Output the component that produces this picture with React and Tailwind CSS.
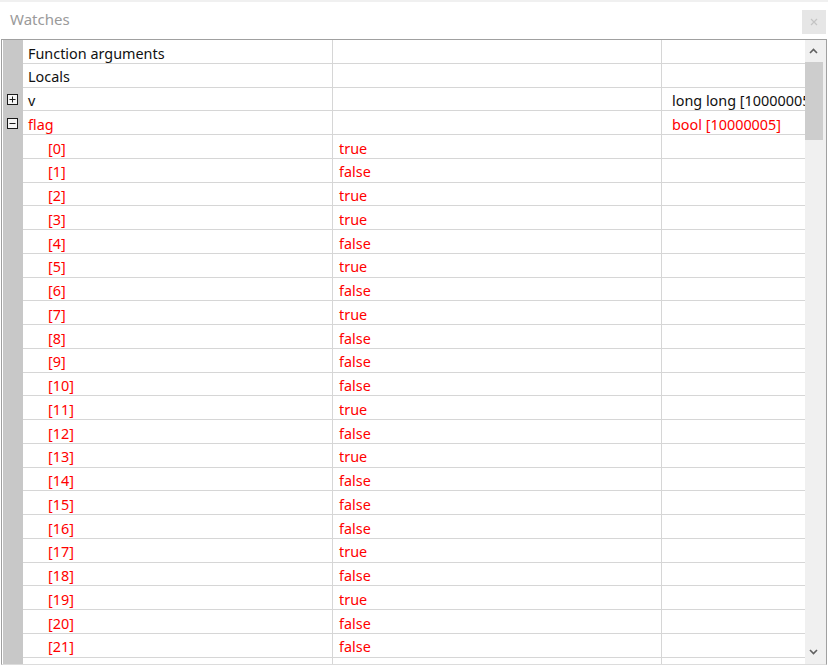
const rows = [
  { name: "Function arguments", value: "", type: "", color: "black", level: 0 },
  { name: "Locals", value: "", type: "", color: "black", level: 0 },
  { name: "v", value: "", type: "long long [10000005]", color: "black", level: 0, toggle: "plus" },
  { name: "flag", value: "", type: "bool [10000005]", color: "red", level: 0, toggle: "minus" },
];

const flags = [
  true, false, true, true, false, true, false, true, false, false, false,
  true, false, true, false, false, false, true, false, true, false, false,
];

flags.forEach((f, i) => {
  rows.push({ name: `[${i}]`, value: f ? "true" : "false", type: "", color: "red", level: 1 });
});

// partly visible row below the fold, its text falls outside the panel
rows.push({ name: "", value: "", type: "", color: "red", level: 1 });

function Toggle({ kind }) {
  return (
    <svg width="11" height="11" viewBox="0 0 11 11" className="block">
      <rect x="0.5" y="0.5" width="10" height="10" fill="#f4f4f4" stroke="#1a1a1a" />
      <line x1="2.5" y1="5.5" x2="8.5" y2="5.5" stroke="#1a1a1a" />
      {kind === "plus" && <line x1="5.5" y1="2.5" x2="5.5" y2="8.5" stroke="#1a1a1a" />}
    </svg>
  );
}

function Row({ row }) {
  const text = row.color === "red" ? "text-[#ff0000]" : "text-[#111111]";
  return (
    <div className="flex h-[23.76px] shrink-0">
      <div className="w-[20px] shrink-0 bg-[#c8c8c8] flex items-center pl-[4px] pt-[1px]">
        {row.toggle && <Toggle kind={row.toggle} />}
      </div>
      <div className="flex flex-1 border-b border-[#d6d6d6]">
        <div
          className={`w-[310px] shrink-0 border-r border-[#d6d6d6] flex items-center pt-[5px] whitespace-nowrap overflow-hidden ${text} ${
            row.level ? "pl-[25px]" : "pl-[5px]"
          }`}
        >
          {row.name}
        </div>
        <div className={`w-[329px] shrink-0 border-r border-[#d6d6d6] flex items-center pt-[5px] pl-[6px] ${text}`}>
          {row.value}
        </div>
        <div className={`flex-1 min-w-0 flex items-center pt-[5px] pl-[10px] whitespace-nowrap overflow-hidden ${text}`}>
          {row.type}
        </div>
      </div>
    </div>
  );
}

export default function App() {
  return (
    <div
      className="w-[828px] h-[666px] bg-white overflow-hidden text-[14.4px] leading-none"
      style={{ fontFamily: '"Noto Sans", "Open Sans", sans-serif' }}
    >
      {/* title bar */}
      <div className="h-[39px] border-t-2 border-[#f0f0f0] flex items-start justify-between">
        <div className="pl-[10px] pt-[10px] text-[15px] text-[#9a9a9a]">Watches</div>
        <div className="mt-[8px] mr-[2px] w-[24px] h-[24px] bg-[#e6e6e6] flex items-center justify-center">
          <svg width="8" height="8" viewBox="0 0 8 8">
            <path d="M1 1 L7 7 M7 1 L1 7" stroke="#c4c4c4" strokeWidth="1.2" />
          </svg>
        </div>
      </div>

      {/* watch grid */}
      <div className="ml-[1px] w-[826px] h-[626px] border border-[#a0a0a0] border-b-[#dcdcdc] flex overflow-hidden">
        <div className="flex-1 flex flex-col overflow-hidden pl-[1px]">
          {rows.map((row, i) => (
            <Row key={i} row={row} />
          ))}
        </div>
        <div className="w-[21px] shrink-0 bg-[#f0f0f0] flex flex-col items-center">
          <div className="h-[22px] w-full flex items-center justify-center pr-[4px]">
            <svg width="9" height="6" viewBox="0 0 9 6">
              <path d="M1 5 L4.5 1.5 L8 5" fill="none" stroke="#606060" strokeWidth="1.6" />
            </svg>
          </div>
          <div className="w-[18px] h-[78px] bg-[#cdcdcd] mr-[3px]" />
          <div className="flex-1" />
          <div className="h-[16px] w-full flex items-start justify-center pr-[4px] pt-[1px]">
            <svg width="9" height="6" viewBox="0 0 9 6">
              <path d="M1 1 L4.5 4.5 L8 1" fill="none" stroke="#606060" strokeWidth="1.6" />
            </svg>
          </div>
        </div>
      </div>
    </div>
  );
}
